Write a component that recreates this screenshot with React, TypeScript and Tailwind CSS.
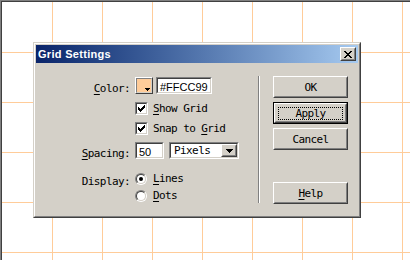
import type { ReactNode } from "react"

const mono = "font-['DejaVu_Sans_Mono',monospace] text-[11px] tracking-[-0.6px] text-black leading-none"
const sans = "font-['Liberation_Sans',Arial,sans-serif] text-[11px] text-black leading-none"

// pixel glyphs: [x, y, w]
const checkPx = [[6, 0, 1], [5, 1, 2], [0, 2, 1], [4, 2, 3], [0, 3, 2], [3, 3, 3], [0, 4, 5], [1, 5, 3], [2, 6, 1]]
const closePx = [[0, 0, 2], [6, 0, 2], [1, 1, 2], [5, 1, 2], [2, 2, 4], [3, 3, 2], [2, 4, 4], [1, 5, 2], [5, 5, 2], [0, 6, 2], [6, 6, 2]]
const arrowPx = [[0, 0, 7], [1, 1, 5], [2, 2, 3], [3, 3, 1]]
const smallArrowPx = [[0, 0, 5], [1, 1, 3], [2, 2, 1]]

function Pixels({ px, w, h }: { px: number[][]; w: number; h: number }) {
  return (
    <svg width={w} height={h} viewBox={`0 0 ${w} ${h}`} shapeRendering="crispEdges">
      {px.map(([x, y, l], i) => (
        <rect key={i} x={x} y={y} width={l} height={1} fill="#000" />
      ))}
    </svg>
  )
}

function Sunken({ className = "", children }: { className?: string; children?: ReactNode }) {
  return (
    <div className={`border border-t-[#808080] border-l-[#808080] border-r-white border-b-white ${className}`}>
      <div className="flex h-full w-full border border-t-[#404040] border-l-[#404040] border-r-[#D4D0C8] border-b-[#D4D0C8] bg-white">
        {children}
      </div>
    </div>
  )
}

function Raised({ className = "", children }: { className?: string; children?: ReactNode }) {
  return (
    <div className={`border border-t-white border-l-white border-r-[#404040] border-b-[#404040] ${className}`}>
      <div className="flex h-full w-full items-center justify-center border border-t-[#D4D0C8] border-l-[#D4D0C8] border-r-[#808080] border-b-[#808080] bg-[#D4D0C8]">
        {children}
      </div>
    </div>
  )
}

function Text({ text, mn }: { text: string; mn?: number }) {
  return (
    <span className={mono}>
      {text.split("").map((c, i) => (
        <span key={i} className={i === mn ? "underline underline-offset-2" : ""}>{c}</span>
      ))}
    </span>
  )
}

function Label({ text, mn }: { text: string; mn?: number }) {
  return (
    <div className="w-[94px] text-right">
      <Text text={text} mn={mn} />
    </div>
  )
}

function Checkbox() {
  return (
    <Sunken className="h-[13px] w-[13px]">
      <div className="flex h-full w-full items-center justify-center">
        <Pixels px={checkPx} w={7} h={7} />
      </div>
    </Sunken>
  )
}

function Radio({ on }: { on?: boolean }) {
  return (
    <div className="h-[12px] w-[12px] rounded-full border border-t-[#808080] border-l-[#808080] border-r-white border-b-white">
      <div className="flex h-full w-full items-center justify-center rounded-full border border-t-[#404040] border-l-[#404040] border-r-[#D4D0C8] border-b-[#D4D0C8] bg-white">
        {on && <div className="h-[4px] w-[4px] rounded-full bg-black" />}
      </div>
    </div>
  )
}

function DialogButton({ text, mn, isDefault }: { text: string; mn?: number; isDefault?: boolean }) {
  if (isDefault) {
    return (
      <div className="h-[22px] w-[75px] border border-black">
        <Raised className="h-full w-full">
          <div className="flex h-[13px] w-[65px] items-center justify-center border border-dotted border-black">
            <Text text={text} mn={mn} />
          </div>
        </Raised>
      </div>
    )
  }
  return (
    <Raised className="h-[22px] w-[75px]">
      <Text text={text} mn={mn} />
    </Raised>
  )
}

const gridX = [50, 100, 150, 200, 250, 300, 350, 400]
const gridY = [50, 100, 150, 200, 250]

function GridLines() {
  return (
    <svg className="absolute inset-0" width="408" height="258" shapeRendering="crispEdges">
      {gridX.map((x) => (
        <rect key={`x${x}`} x={x} y={0} width={1} height={258} fill="#FFCC99" />
      ))}
      {gridY.map((y) => (
        <rect key={`y${y}`} x={0} y={y} width={408} height={1} fill="#FFCC99" />
      ))}
    </svg>
  )
}

export default function App() {
  return (
    <div className="h-[260px] w-[410px] border-l border-t border-[#808080] bg-white">
      <div className="relative h-full w-full overflow-hidden border-l border-t border-[#404040] bg-white">
        <GridLines />

        {/* dialog window */}
        <div className="absolute left-[31px] top-[40px] h-[176px] w-[328px] border border-t-[#D4D0C8] border-l-[#D4D0C8] border-r-[#404040] border-b-[#404040]">
          <div className="flex h-full flex-col border border-t-white border-l-white border-r-[#808080] border-b-[#808080] bg-[#D4D0C8] p-px">
            <div className="flex h-[18px] items-center justify-between bg-linear-to-r from-[#0A246A] to-[#A6CAF0] pl-[2px] pr-[2px]">
              <span className="font-['Liberation_Sans',Arial,sans-serif] text-[11px] font-bold leading-none tracking-[0.3px] text-white">
                Grid Settings
              </span>
              <Raised className="h-[14px] w-[16px]">
                <Pixels px={closePx} w={8} h={7} />
              </Raised>
            </div>

            <div className="flex flex-1">
              <div className="flex w-[222px] flex-col">
                <div className="mt-[14px] flex h-[17px] items-center gap-[5px]">
                  <Label text="Color:" mn={0} />
                  <div className="flex items-center gap-[3px]">
                    <div className="h-[17px] w-[18px] border border-t-white border-l-white border-r-[#404040] border-b-[#404040]">
                      <div className="flex h-full w-full items-end justify-end border border-t-[#808080] border-l-[#808080] border-r-[#D4D0C8] border-b-[#D4D0C8] bg-[#FFCC99] pb-[1px] pr-[1px]">
                        <Pixels px={smallArrowPx} w={5} h={3} />
                      </div>
                    </div>
                    <Sunken className="h-[17px] w-[56px]">
                      <span className={`${sans} ml-[2px] mt-[3px]`}>#FFCC99</span>
                    </Sunken>
                  </div>
                </div>

                <div className="mt-[8px] flex h-[13px] items-center gap-[5px]">
                  <div className="w-[94px]" />
                  <Checkbox />
                  <Text text="Show Grid" mn={0} />
                </div>

                <div className="mt-[7px] flex h-[13px] items-center gap-[5px]">
                  <div className="w-[94px]" />
                  <Checkbox />
                  <Text text="Snap to Grid" mn={8} />
                </div>

                <div className="mt-[7px] flex h-[17px] items-center gap-[5px]">
                  <Label text="Spacing:" mn={0} />
                  <Sunken className="h-[17px] w-[29px]">
                    <span className={`${sans} ml-[2px] mt-[3px]`}>50</span>
                  </Sunken>
                  <Sunken className="h-[17px] w-[70px]">
                    <div className="flex flex-1 items-center pl-[3px]">
                      <Text text="Pixels" />
                    </div>
                    <Raised className="h-full w-[16px]">
                      <Pixels px={arrowPx} w={7} h={4} />
                    </Raised>
                  </Sunken>
                </div>

                <div className="mt-[13px] flex h-[13px] items-center gap-[5px]">
                  <Label text="Display:" />
                  <div className="flex w-[13px] items-center">
                    <Radio on />
                  </div>
                  <Text text="Lines" mn={0} />
                </div>

                <div className="mt-[4px] flex h-[13px] items-center gap-[5px]">
                  <div className="w-[94px]" />
                  <div className="flex w-[13px] items-center">
                    <Radio />
                  </div>
                  <Text text="Dots" mn={0} />
                </div>
              </div>

              <div className="mt-[13px] h-[127px] w-[2px] border-l border-r border-l-[#808080] border-r-white" />

              <div className="ml-[13px] mt-[13px] flex flex-col gap-[4px]">
                <DialogButton text="OK" />
                <DialogButton text="Apply" isDefault />
                <DialogButton text="Cancel" />
                <div className="mt-[28px]">
                  <DialogButton text="Help" mn={0} />
                </div>
              </div>
            </div>
          </div>
        </div>
      </div>
    </div>
  )
}
